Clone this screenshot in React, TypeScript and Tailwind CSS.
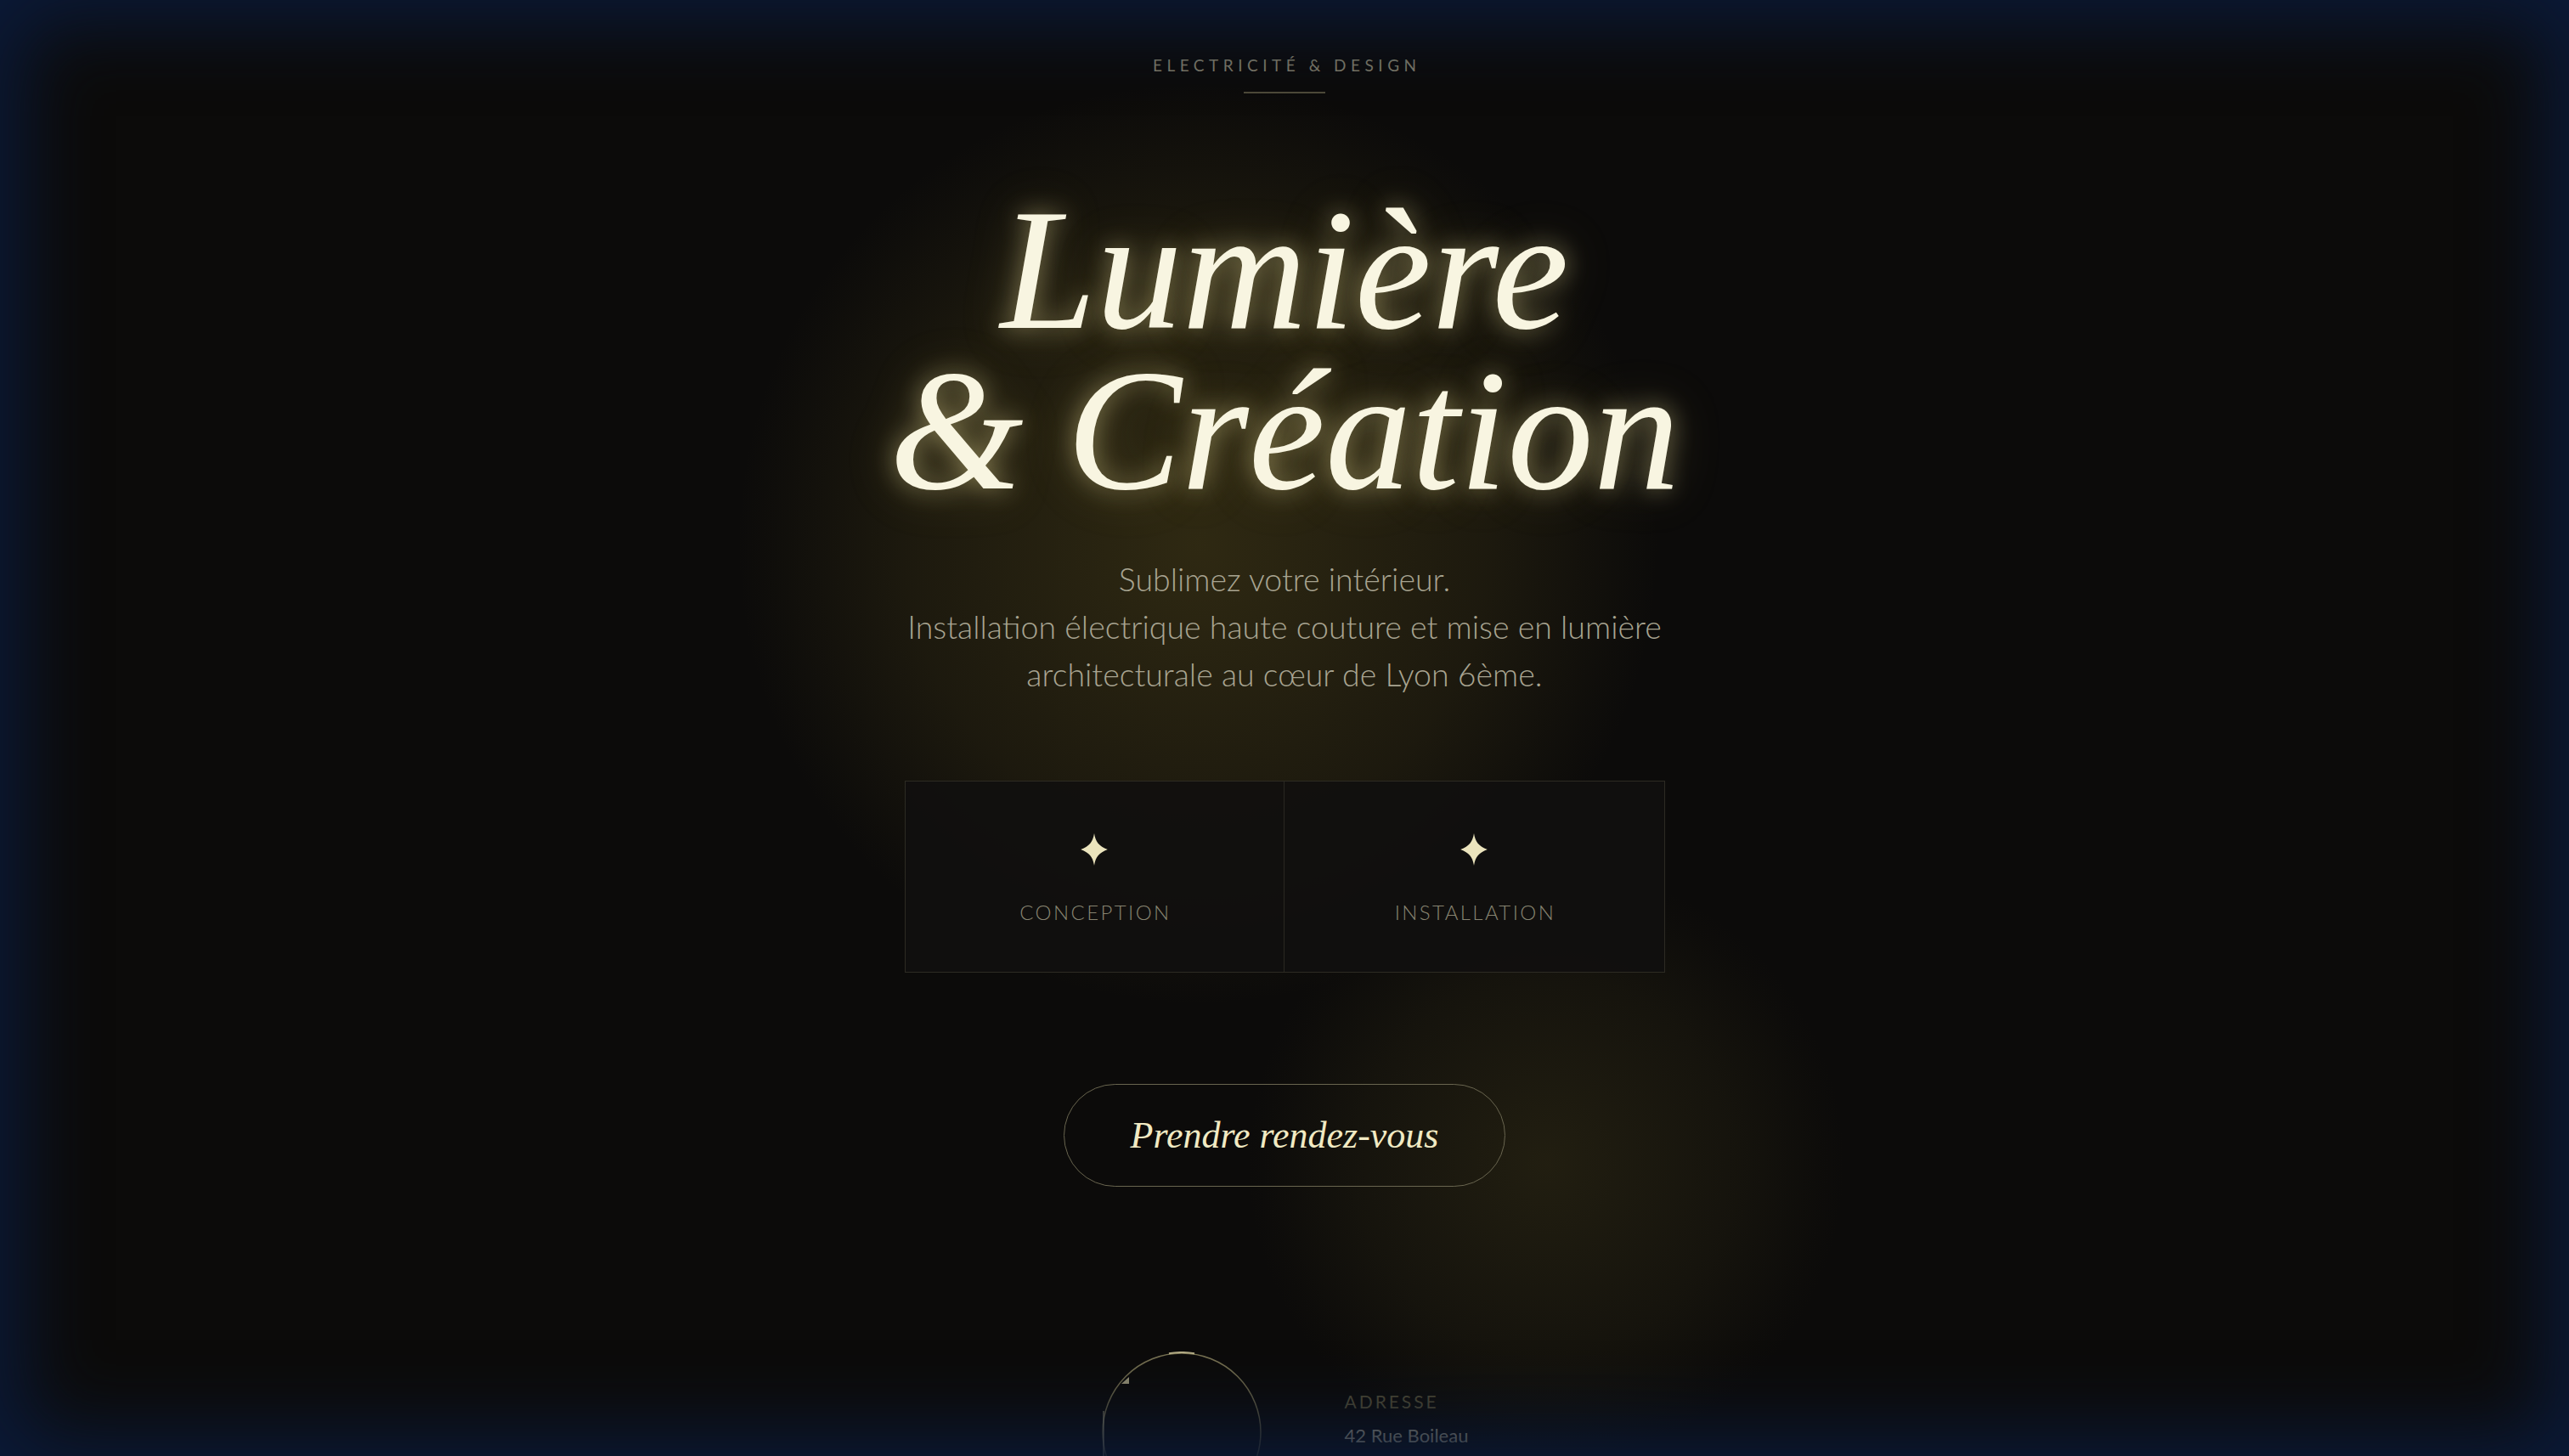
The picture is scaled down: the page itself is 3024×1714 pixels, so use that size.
import React from "react";

const sans = { fontFamily: "Lato, 'Open Sans', sans-serif" };
const serif = { fontFamily: "'Liberation Serif', 'DejaVu Serif', serif" };

function Star() {
  return (
    <svg width="38" height="38" viewBox="0 0 36 36" className="block">
      <path
        d="M18 0 C19.5 9.5 23 14 33 18 C23 22 19.5 26.5 18 36 C16.5 26.5 13 22 3 18 C13 14 16.5 9.5 18 0 Z"
        fill="#ebe4bd"
      />
    </svg>
  );
}

function Ring() {
  return (
    <svg width="190" height="190" viewBox="0 0 190 190" className="block shrink-0">
      <defs>
        <linearGradient id="rg" x1="0" y1="0" x2="0" y2="1">
          <stop offset="0" stopColor="#8d8660" stopOpacity="0.85" />
          <stop offset="0.6" stopColor="#6b6547" stopOpacity="0.6" />
          <stop offset="1" stopColor="#6b6547" stopOpacity="0.4" />
        </linearGradient>
      </defs>
      <circle cx="95" cy="95" r="93" fill="none" stroke="url(#rg)" strokeWidth="1.5" />
      <path d="M80 2.2 A93 93 0 0 1 110 2.2" fill="none" stroke="#b5ad86" strokeWidth="2" />
      <path d="M24 38 L33 30 L33 38 Z" fill="#8f8a70" />
      <path d="M3 70 L3 125" stroke="#9a9478" strokeWidth="1.5" opacity="0.6" />
    </svg>
  );
}

export default function App() {
  return (
    <div className="relative h-screen w-full overflow-hidden bg-[#0c0b0a]">
      {/* glows */}
      <div className="pointer-events-none absolute left-[870px] top-[100px] h-[1080px] w-[1080px] rounded-full bg-[radial-gradient(circle,rgba(120,104,36,0.32)_0%,rgba(95,82,30,0.2)_45%,rgba(50,44,18,0.08)_66%,transparent_71%)]" />
      <div className="pointer-events-none absolute left-[1470px] top-[1020px] h-[700px] w-[700px] rounded-full bg-[radial-gradient(circle,rgba(110,98,40,0.22)_0%,rgba(85,76,32,0.13)_45%,rgba(40,36,15,0.05)_66%,transparent_71%)]" />

      <main className="relative flex flex-col items-center">
        <div className="mt-[66px] flex flex-col items-center">
          <p
            className="pl-[0.29em] text-[19px] leading-[22px] tracking-[0.29em] text-[#7f7c69]"
            style={sans}
          >
            ELECTRICITÉ &amp; DESIGN
          </p>
          <div className="mt-[20px] h-[2px] w-[96px] bg-[#4f4b39]" />
        </div>

        <h1
          className="mt-[113px] text-center text-[203px] font-normal italic leading-[189px] text-[#f8f5e1] [text-shadow:0_0_28px_rgba(245,230,160,0.45),0_0_60px_rgba(230,210,120,0.25)]"
          style={serif}
        >
          Lumière
          <br />
          &amp; Création
        </h1>

        <p
          className="mt-[53px] text-center text-[37.5px] font-light leading-[56px] text-[#a8a491]"
          style={sans}
        >
          Sublimez votre intérieur.
          <br />
          Installation électrique haute couture et mise en lumière
          <br />
          architecturale au cœur de Lyon 6ème.
        </p>

        <div className="mt-[97px] grid h-[226px] w-[895px] grid-cols-2 border border-[#2d2b23] bg-[#11100e]/90">
          {["CONCEPTION", "INSTALLATION"].map((t, i) => (
            <div
              key={t}
              className={`flex flex-col items-center pt-[61px] ${i === 0 ? "border-r border-[#2a2821]" : ""}`}
            >
              <Star />
              <span
                className="mt-[42px] pl-[0.1em] text-[24px] font-light leading-[26px] tracking-[0.1em] text-[#878471]"
                style={sans}
              >
                {t}
              </span>
            </div>
          ))}
        </div>

        <button
          className="mt-[131px] flex h-[121px] w-[520px] items-center justify-center rounded-full border-[1.5px] border-[#69654f] bg-transparent text-[44px] italic text-[#f1eac3]"
          style={serif}
        >
          Prendre rendez-vous
        </button>

        <div className="mt-[194px] flex items-start gap-[97px]">
          <Ring />
          <div className="mt-[47px] flex flex-col" style={sans}>
            <span className="text-[21px] leading-[24px] tracking-[0.14em] text-[#4b4732]">ADRESSE</span>
            <span className="mt-[15px] text-[22px] leading-[26px] text-[#8a8776]">42 Rue Boileau</span>
          </div>
        </div>
      </main>

      {/* vignette */}
      <div className="pointer-events-none absolute inset-0 shadow-[inset_0_0_90px_28px_#0b1a38]" />
    </div>
  );
}
